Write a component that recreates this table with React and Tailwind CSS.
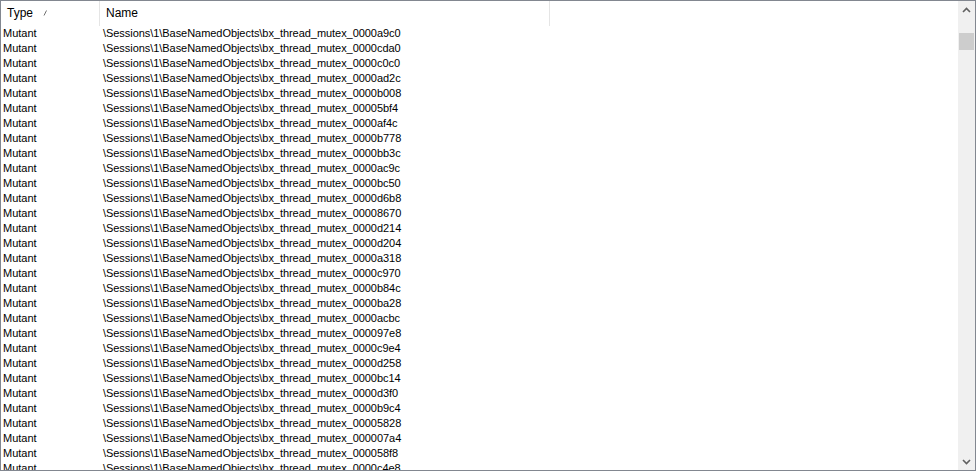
import React from "react";

const ids = [
  "0000a9c0","0000cda0","0000c0c0","0000ad2c","0000b008","00005bf4","0000af4c","0000b778",
  "0000bb3c","0000ac9c","0000bc50","0000d6b8","00008670","0000d214","0000d204","0000a318",
  "0000c970","0000b84c","0000ba28","0000acbc","000097e8","0000c9e4","0000d258","0000bc14",
  "0000d3f0","0000b9c4","00005828","000007a4","000058f8","0000c4e8",
];

export default function App() {
  return (
    <div className="w-[976px] h-[471px] bg-white border border-[#828790] flex overflow-hidden text-[11px] text-black" style={{ fontFamily: '"Liberation Sans", Arial, sans-serif' }}>
      <div className="flex-1 flex flex-col overflow-hidden">
        <div className="flex h-[25px] shrink-0 items-stretch text-[12px]">
          <div className="w-[99px] flex items-center pl-[6px] pb-[2px] border-r border-[#e5e5e5] relative">
            <span>Type</span>
            <svg className="absolute left-[42px] top-[9px]" width="5" height="6" viewBox="0 0 5 6">
              <path d="M1 5.5 L3.5 0.5" stroke="#707070" strokeWidth="1" />
            </svg>
          </div>
          <div className="w-[450px] flex items-center pl-[6px] pb-[2px] border-r border-[#e5e5e5]">
            <span>Name</span>
          </div>
        </div>
        <div className="flex flex-col">
          {ids.map((id) => (
            <div key={id} className="flex h-[15px] items-center shrink-0 leading-[15px]">
              <div className="w-[99px] pl-[2px]">Mutant</div>
              <div className="pl-[3px] whitespace-nowrap tracking-[-0.05px]">{"\\Sessions\\1\\BaseNamedObjects\\bx_thread_mutex_" + id}</div>
            </div>
          ))}
        </div>
      </div>
      <div className="w-[17px] bg-[#f0f0f0] flex flex-col shrink-0">
        <div className="h-[17px] flex items-center justify-center">
          <svg width="9" height="6" viewBox="0 0 9 6"><path d="M1 5 L4.5 1.5 L8 5" stroke="#606060" strokeWidth="1.6" fill="none" /></svg>
        </div>
        <div className="h-[15px]" />
        <div className="h-[17px] mx-[1px] bg-[#cdcdcd]" />
        <div className="flex-1" />
        <div className="h-[17px] flex items-center justify-center">
          <svg width="9" height="6" viewBox="0 0 9 6"><path d="M1 1 L4.5 4.5 L8 1" stroke="#606060" strokeWidth="1.6" fill="none" /></svg>
        </div>
      </div>
    </div>
  );
}
